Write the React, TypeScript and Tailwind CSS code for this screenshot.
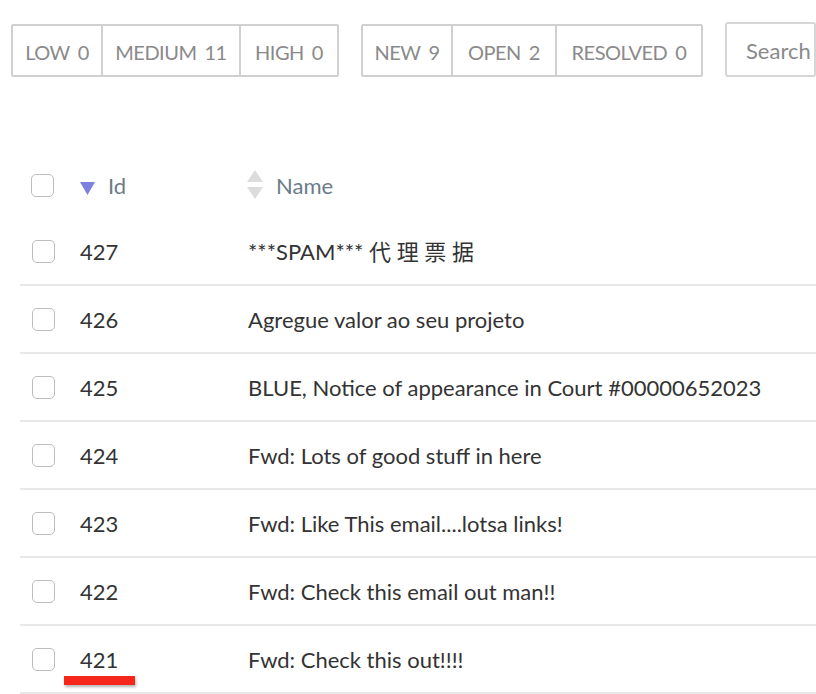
import React from "react";

const rows = [
  { id: "427", name: "***SPAM*** 代 理 票 据" },
  { id: "426", name: "Agregue valor ao seu projeto" },
  { id: "425", name: "BLUE, Notice of appearance in Court #00000652023" },
  { id: "424", name: "Fwd: Lots of good stuff in here" },
  { id: "423", name: "Fwd: Like This email....lotsa links!" },
  { id: "422", name: "Fwd: Check this email out man!!" },
  { id: "421", name: "Fwd: Check this out!!!!" },
];

function Checkbox() {
  return <div className="w-[23px] h-[23px] rounded-[5px] border border-[#bdbdbd] bg-white" />;
}

function Btn({ label, count, w, first }: { label: string; count: string; w: string; first?: boolean }) {
  return (
    <div
      className={`${w} h-full flex items-center justify-center gap-[8px] pt-[2px] ${first ? "" : "border-l-2 border-[#d0d0d0]"}`}
    >
      <span>{label}</span>
      <span>{count}</span>
    </div>
  );
}

export default function App() {
  return (
    <div
      className="relative w-[816px] h-[694px] overflow-hidden bg-white"
      style={{ fontFamily: "Lato, 'Noto Sans CJK SC', sans-serif" }}
    >
      <div className="flex items-end gap-[22px] pl-[11px] pt-[22px]">
        <div className="flex h-[53px] border-2 border-[#d0d0d0] rounded-[2px] text-[20px] tracking-[-0.5px] text-[#8a8a8a]">
          <Btn label="LOW" count="0" w="w-[88px]" first />
          <Btn label="MEDIUM" count="11" w="w-[138px]" />
          <Btn label="HIGH" count="0" w="w-[98px]" />
        </div>
        <div className="flex h-[53px] border-2 border-[#d0d0d0] rounded-[2px] text-[20px] tracking-[-0.5px] text-[#8a8a8a]">
          <Btn label="NEW" count="9" w="w-[88px]" first />
          <Btn label="OPEN" count="2" w="w-[104px]" />
          <Btn label="RESOLVED" count="0" w="w-[146px]" />
        </div>
        <div className="h-[55px] w-[200px] border-2 border-[#d6d6d6] rounded-[3px] flex items-center pl-[19px] pt-[2px] text-[22px] text-[#8a8a8a]">
          Search
        </div>
      </div>

      <div className="ml-[20px] mt-[75px]">
        <div className="flex items-center h-[66px]">
          <div className="w-[60px] pl-[11px]">
            <Checkbox />
          </div>
          <div className="w-[167px] flex items-center gap-[13px] text-[22px] text-[#6b7c88]">
            <svg width="15" height="13" viewBox="0 0 15 13" className="mt-[6px]">
              <polygon points="0,0 15,0 7.5,13" fill="#7d80e0" />
            </svg>
            <span>Id</span>
          </div>
          <div className="flex items-center gap-[13px] text-[22px] text-[#6b7c88]">
            <svg width="16" height="30" viewBox="0 0 16 30">
              <polygon points="8,0 16,12 0,12" fill="#dcdcdc" />
              <polygon points="0,17 16,17 8,29" fill="#dcdcdc" />
            </svg>
            <span>Name</span>
          </div>
        </div>
        {rows.map((r) => (
          <div key={r.id} className="flex items-center h-[68px] border-b-2 border-[#e8e8e8] text-[22px] text-[#333]">
            <div className="w-[60px] pl-[12px]">
              <Checkbox />
            </div>
            <div className="w-[168px]">{r.id}</div>
            <div className="whitespace-nowrap">{r.name}</div>
          </div>
        ))}
      </div>

      <div className="absolute left-[64px] top-[676px] w-[71px] h-[9px] bg-[#f5271b] shadow-[1px_2px_3px_rgba(0,0,0,0.3)]" />
    </div>
  );
}
